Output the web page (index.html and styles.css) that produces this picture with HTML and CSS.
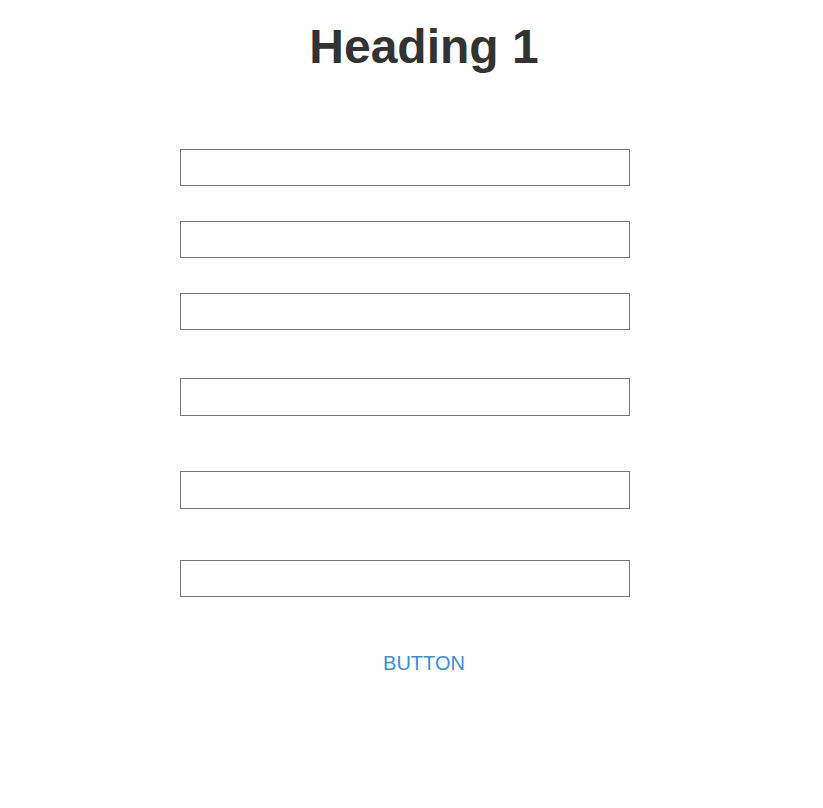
FILE: index.html
```html
<!DOCTYPE html>
<html lang="en">
<head>
<meta charset="utf-8">
<title>Form</title>
<link rel="stylesheet" href="styles.css">
</head>
<body>
<main class="page">
  <h1 class="title">Heading 1</h1>
  <form class="form">
    <input class="field field-1" type="text">
    <input class="field field-2" type="text">
    <input class="field field-3" type="text">
    <input class="field field-4" type="text">
    <input class="field field-5" type="text">
    <input class="field field-6" type="text">
    <button class="btn" type="button">Button</button>
  </form>
</main>
</body>
</html>
```

FILE: styles.css
```css
html, body {
  margin: 0;
  padding: 0;
  background: #ffffff;
}

body {
  font-family: "Liberation Sans", Arial, sans-serif;
  color: #333333;
}

.page {
  margin-left: 180px;
  width: 488px;
  padding-top: 19px;
}

.title {
  margin: 0;
  font-size: 48px;
  font-weight: bold;
  line-height: normal;
  text-align: center;
  color: #333333;
}

.form {
  display: flex;
  flex-direction: column;
  align-items: flex-start;
}

.field {
  box-sizing: border-box;
  width: 450px;
  height: 37px;
  margin: 0;
  padding: 0 8px;
  border: 1px solid #767676;
  border-radius: 0;
  background: #ffffff;
  font: 16px "Liberation Sans", Arial, sans-serif;
  outline: none;
}

.field-1 { margin-top: 75px; }
.field-2 { margin-top: 35px; }
.field-3 { margin-top: 35px; }
.field-4 { margin-top: 48px; height: 38px; }
.field-5 { margin-top: 55px; height: 38px; }
.field-6 { margin-top: 51px; }

.btn {
  align-self: center;
  margin-top: 55px;
  padding: 0;
  border: none;
  background: transparent;
  font-family: "Liberation Sans", Arial, sans-serif;
  font-size: 20px;
  line-height: 23px;
  text-transform: uppercase;
  color: #3a8fd8;
  cursor: pointer;
}
```
